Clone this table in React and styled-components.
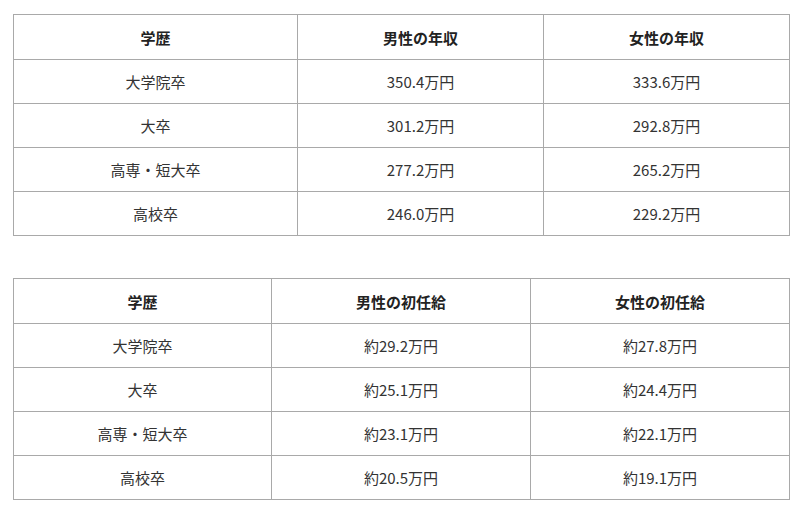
import React from "react";
import styled, { createGlobalStyle } from "styled-components";

const Global = createGlobalStyle`
  html, body { margin: 0; padding: 0; background: #fff; }
  body { font-family: "Noto Sans CJK JP", "Noto Sans", sans-serif; color: #333; }
`;

const Page = styled.div`
  padding: 14px 13px;
  display: flex;
  flex-direction: column;
  gap: 42px;
`;

const Table = styled.table`
  width: 776px;
  border-collapse: collapse;
  table-layout: fixed;
  font-size: 15px;
`;

const Th = styled.th`
  border: 1px solid #a9a9a9;
  height: 44px;
  padding: 0;
  font-weight: 700;
  text-align: center;
  color: #222;
`;

const Td = styled.td`
  border: 1px solid #a9a9a9;
  height: 43px;
  padding: 0;
  text-align: center;
  font-weight: 400;
`;

const tables = [
  {
    cols: [284, 246, 246],
    head: ["学歴", "男性の年収", "女性の年収"],
    rows: [
      ["大学院卒", "350.4万円", "333.6万円"],
      ["大卒", "301.2万円", "292.8万円"],
      ["高専・短大卒", "277.2万円", "265.2万円"],
      ["高校卒", "246.0万円", "229.2万円"],
    ],
  },
  {
    cols: [258, 259, 259],
    head: ["学歴", "男性の初任給", "女性の初任給"],
    rows: [
      ["大学院卒", "約29.2万円", "約27.8万円"],
      ["大卒", "約25.1万円", "約24.4万円"],
      ["高専・短大卒", "約23.1万円", "約22.1万円"],
      ["高校卒", "約20.5万円", "約19.1万円"],
    ],
  },
];

export default function App() {
  return (
    <>
      <Global />
      <Page>
        {tables.map((t, i) => (
          <Table key={i}>
            <colgroup>
              {t.cols.map((w, j) => (
                <col key={j} style={{ width: w }} />
              ))}
            </colgroup>
            <thead>
              <tr>
                {t.head.map((h) => (
                  <Th key={h}>{h}</Th>
                ))}
              </tr>
            </thead>
            <tbody>
              {t.rows.map((r) => (
                <tr key={r[0]}>
                  {r.map((c, k) => (
                    <Td key={k}>{c}</Td>
                  ))}
                </tr>
              ))}
            </tbody>
          </Table>
        ))}
      </Page>
    </>
  );
}
